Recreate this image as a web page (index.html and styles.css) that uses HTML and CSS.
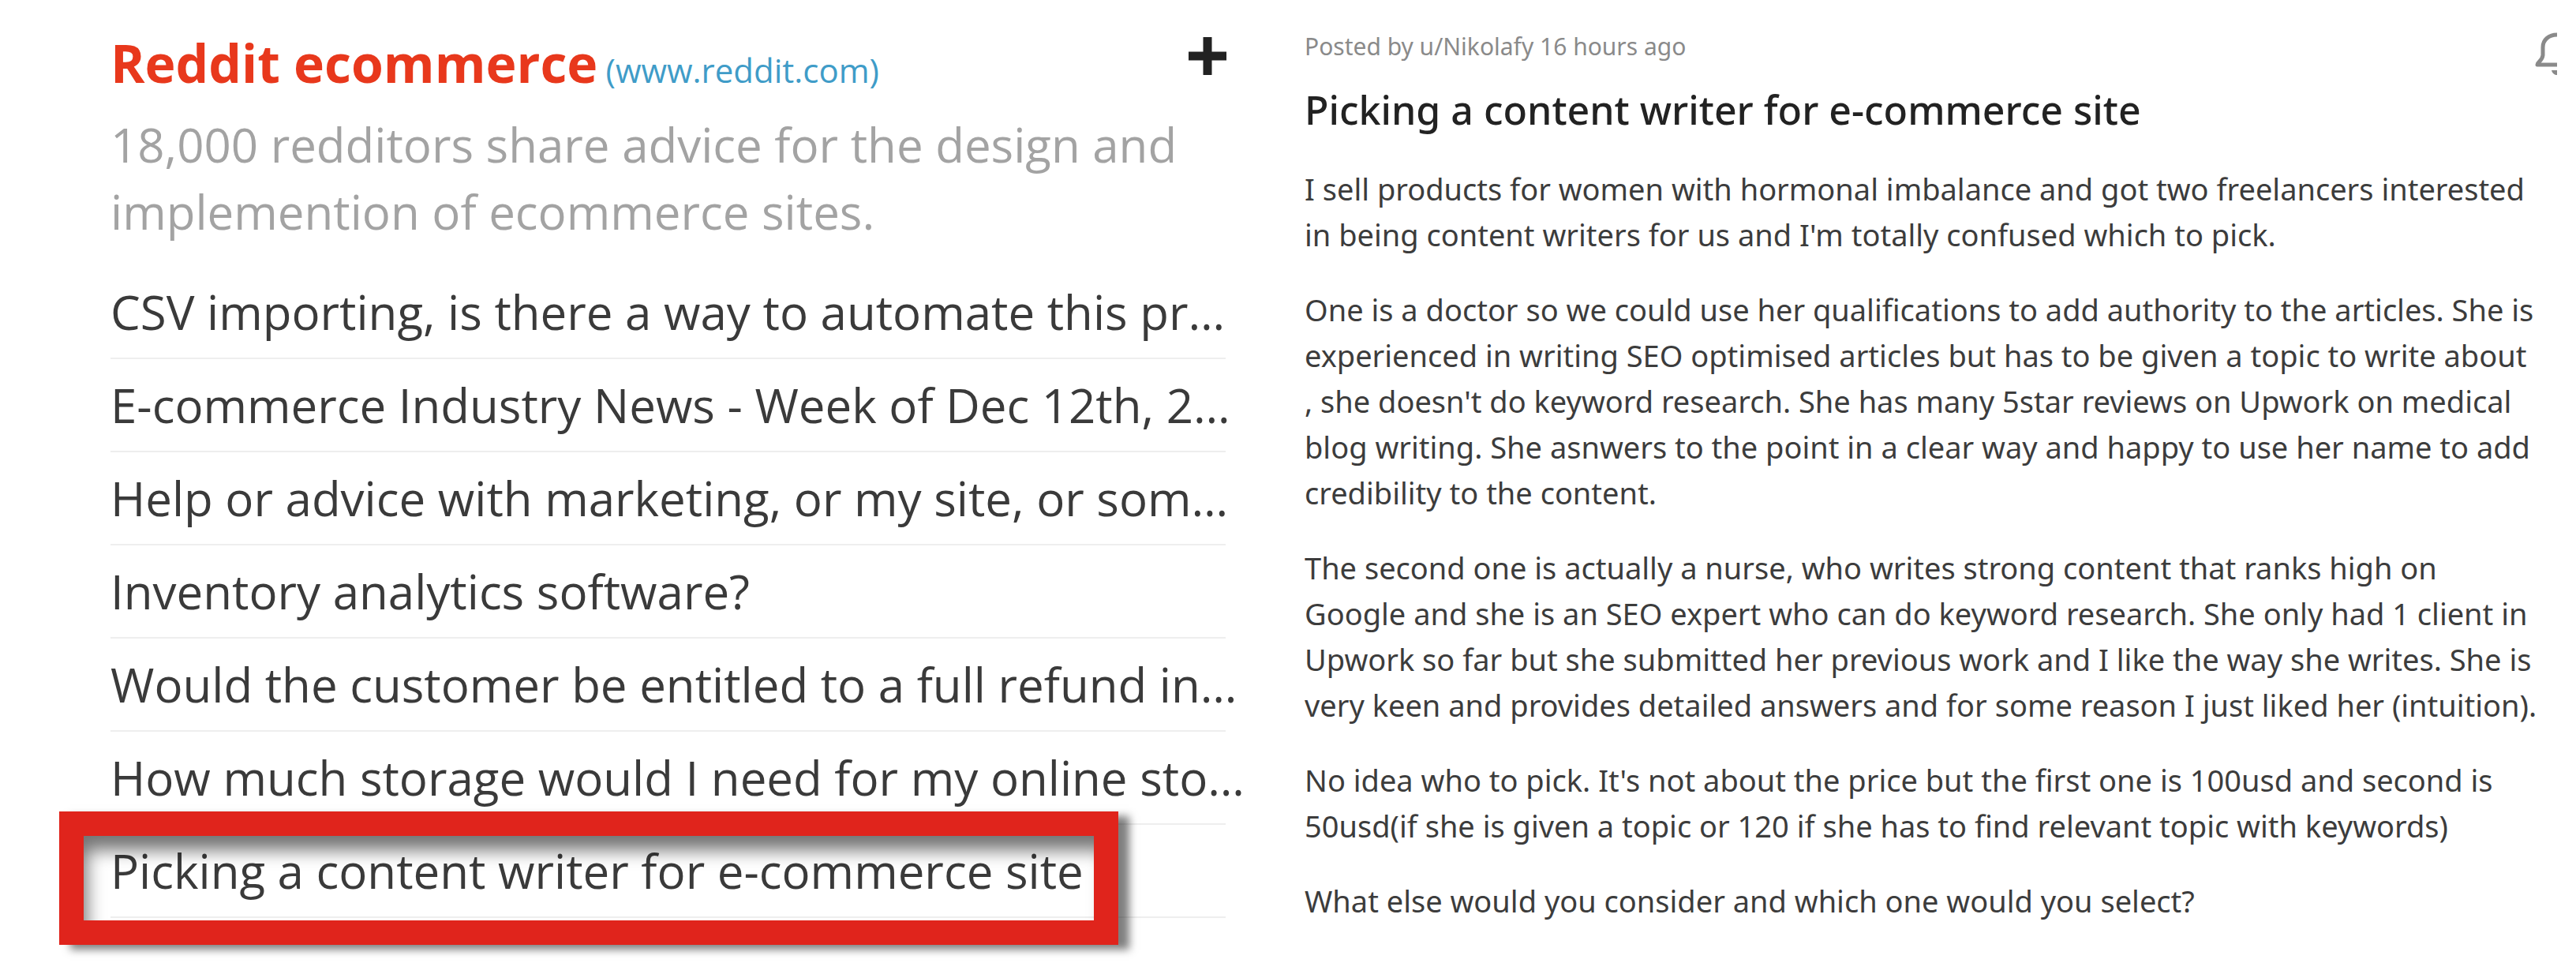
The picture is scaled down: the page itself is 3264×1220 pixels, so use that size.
FILE: index.html
```html
<!DOCTYPE html>
<html lang="en">
<head>
  <meta charset="UTF-8">
  <title>Reddit ecommerce</title>
  <link rel="stylesheet" href="styles.css">
</head>
<body>
  <div class="page">
    <!-- Source list -->
    <div class="feed">
      <div class="feed-head">
        <div class="feed-title">
          <span class="feed-name">Reddit ecommerce</span>
          <a class="feed-site" href="#">(www.reddit.com)</a>
        </div>
        <svg class="plus" width="48" height="48" viewBox="0 0 48 48">
          <path d="M24 1v46M1 24h46" stroke="#222" stroke-width="11" stroke-linecap="round"/>
        </svg>
      </div>
      <p class="feed-desc">18,000 redditors share advice for the design and<br>implemention of ecommerce sites.</p>

      <div class="feed-list">
        <div class="feed-row">CSV importing, is there a way to automate this pr…</div>
        <div class="feed-row">E-commerce Industry News - Week of Dec 12th, 2…</div>
        <div class="feed-row">Help or advice with marketing, or my site, or som…</div>
        <div class="feed-row">Inventory analytics software?</div>
        <div class="feed-row">Would the customer be entitled to a full refund in…</div>
        <div class="feed-row">How much storage would I need for my online sto…</div>
        <div class="feed-row feed-row-marked">
          Picking a content writer for e-commerce site
          <div class="marker"></div>
        </div>
      </div>
    </div>

    <!-- Post -->
    <div class="post">
      <div class="post-meta">
        <span>Posted by u/Nikolafy 16 hours ago</span>
        <svg class="bell" width="60" height="56" viewBox="0 0 60 56">
          <path d="M5 42c0-4 6-4 7-12V20C12 10 20 4 30 4s18 6 18 16v10c1 8 7 8 7 12z" fill="none" stroke="#8a8a8a" stroke-width="5" stroke-linejoin="round"/>
          <path d="M23 49h14c-1 4-4 6-7 6s-6-2-7-6z" fill="#8a8a8a"/>
        </svg>
      </div>
      <h1 class="post-title">Picking a content writer for e-commerce site</h1>
      <p>I sell products for women with hormonal imbalance and got two freelancers interested<br>in being content writers for us and I'm totally confused which to pick.</p>
      <p>One is a doctor so we could use her qualifications to add authority to the articles. She is<br>experienced in writing SEO optimised articles but has to be given a topic to write about<br>, she doesn't do keyword research. She has many 5star reviews on Upwork on medical<br>blog writing. She asnwers to the point in a clear way and happy to use her name to add<br>credibility to the content.</p>
      <p>The second one is actually a nurse, who writes strong content that ranks high on<br>Google and she is an SEO expert who can do keyword research. She only had 1 client in<br>Upwork so far but she submitted her previous work and I like the way she writes. She is<br>very keen and provides detailed answers and for some reason I just liked her (intuition).</p>
      <p>No idea who to pick. It's not about the price but the first one is 100usd and second is<br>50usd(if she is given a topic or 120 if she has to find relevant topic with keywords)</p>
      <p>What else would you consider and which one would you select?</p>
    </div>
  </div>
</body>
</html>
```

FILE: styles.css
```css
html, body {
  margin: 0;
  padding: 0;
  background: #fff;
}
body {
  height: 1220px;
  overflow: hidden;
}
.page {
  display: flex;
  height: 1220px;
  overflow: hidden;
}

/* left column */
.feed {
  width: 1413px;
  margin-left: 140px;
  padding-top: 37px;
  font-family: "Open Sans", sans-serif;
  flex: none;
}
.feed-head {
  display: flex;
  justify-content: space-between;
  align-items: flex-start;
}
.feed-title {
  line-height: 84px;
  white-space: nowrap;
}
.feed-name {
  font-size: 66px;
  font-weight: 700;
  color: #e8381c;
}
.feed-site {
  font-size: 42px;
  color: #3f9cc8;
  text-decoration: none;
  margin-left: 6px;
}
.plus {
  margin-top: 10px;
  margin-right: -1px;
  flex: none;
}
.feed-desc {
  margin: 0;
  font-size: 60px;
  line-height: 85px;
  color: #a3a3a3;
  white-space: nowrap;
}
.feed-list {
  margin-top: 26px;
}
.feed-row {
  position: relative;
  height: 116px;
  line-height: 116px;
  border-bottom: 2px solid #eeeeee;
  font-size: 60px;
  color: #3a3a3a;
  white-space: nowrap;
}
.marker {
  position: absolute;
  left: -65px;
  top: -17px;
  width: 1280px;
  height: 107px;
  border: 31px solid #e0241c;
  box-shadow: 14px 6px 10px rgba(0, 0, 0, 0.5), inset 10px 24px 22px -6px rgba(0, 0, 0, 0.55);
}

/* right column */
.post {
  width: 1587px;
  margin-left: 100px;
  padding-top: 30px;
  overflow: hidden;
  flex: none;
  font-family: "Noto Sans", sans-serif;
  font-size: 38px;
  line-height: 58px;
  color: #3c3c3c;
  white-space: nowrap;
}
.post-meta {
  display: flex;
  justify-content: space-between;
  align-items: flex-start;
  height: 60px;
  font-size: 30px;
  color: #8a8a8a;
}
.bell {
  margin-top: 10px;
  margin-right: -30px;
  flex: none;
}
.post-title {
  margin: 18px 0 40px;
  font-size: 50px;
  line-height: 62px;
  font-weight: 500;
  color: #222;
}
.post p {
  margin: 0 0 37px;
}
```
